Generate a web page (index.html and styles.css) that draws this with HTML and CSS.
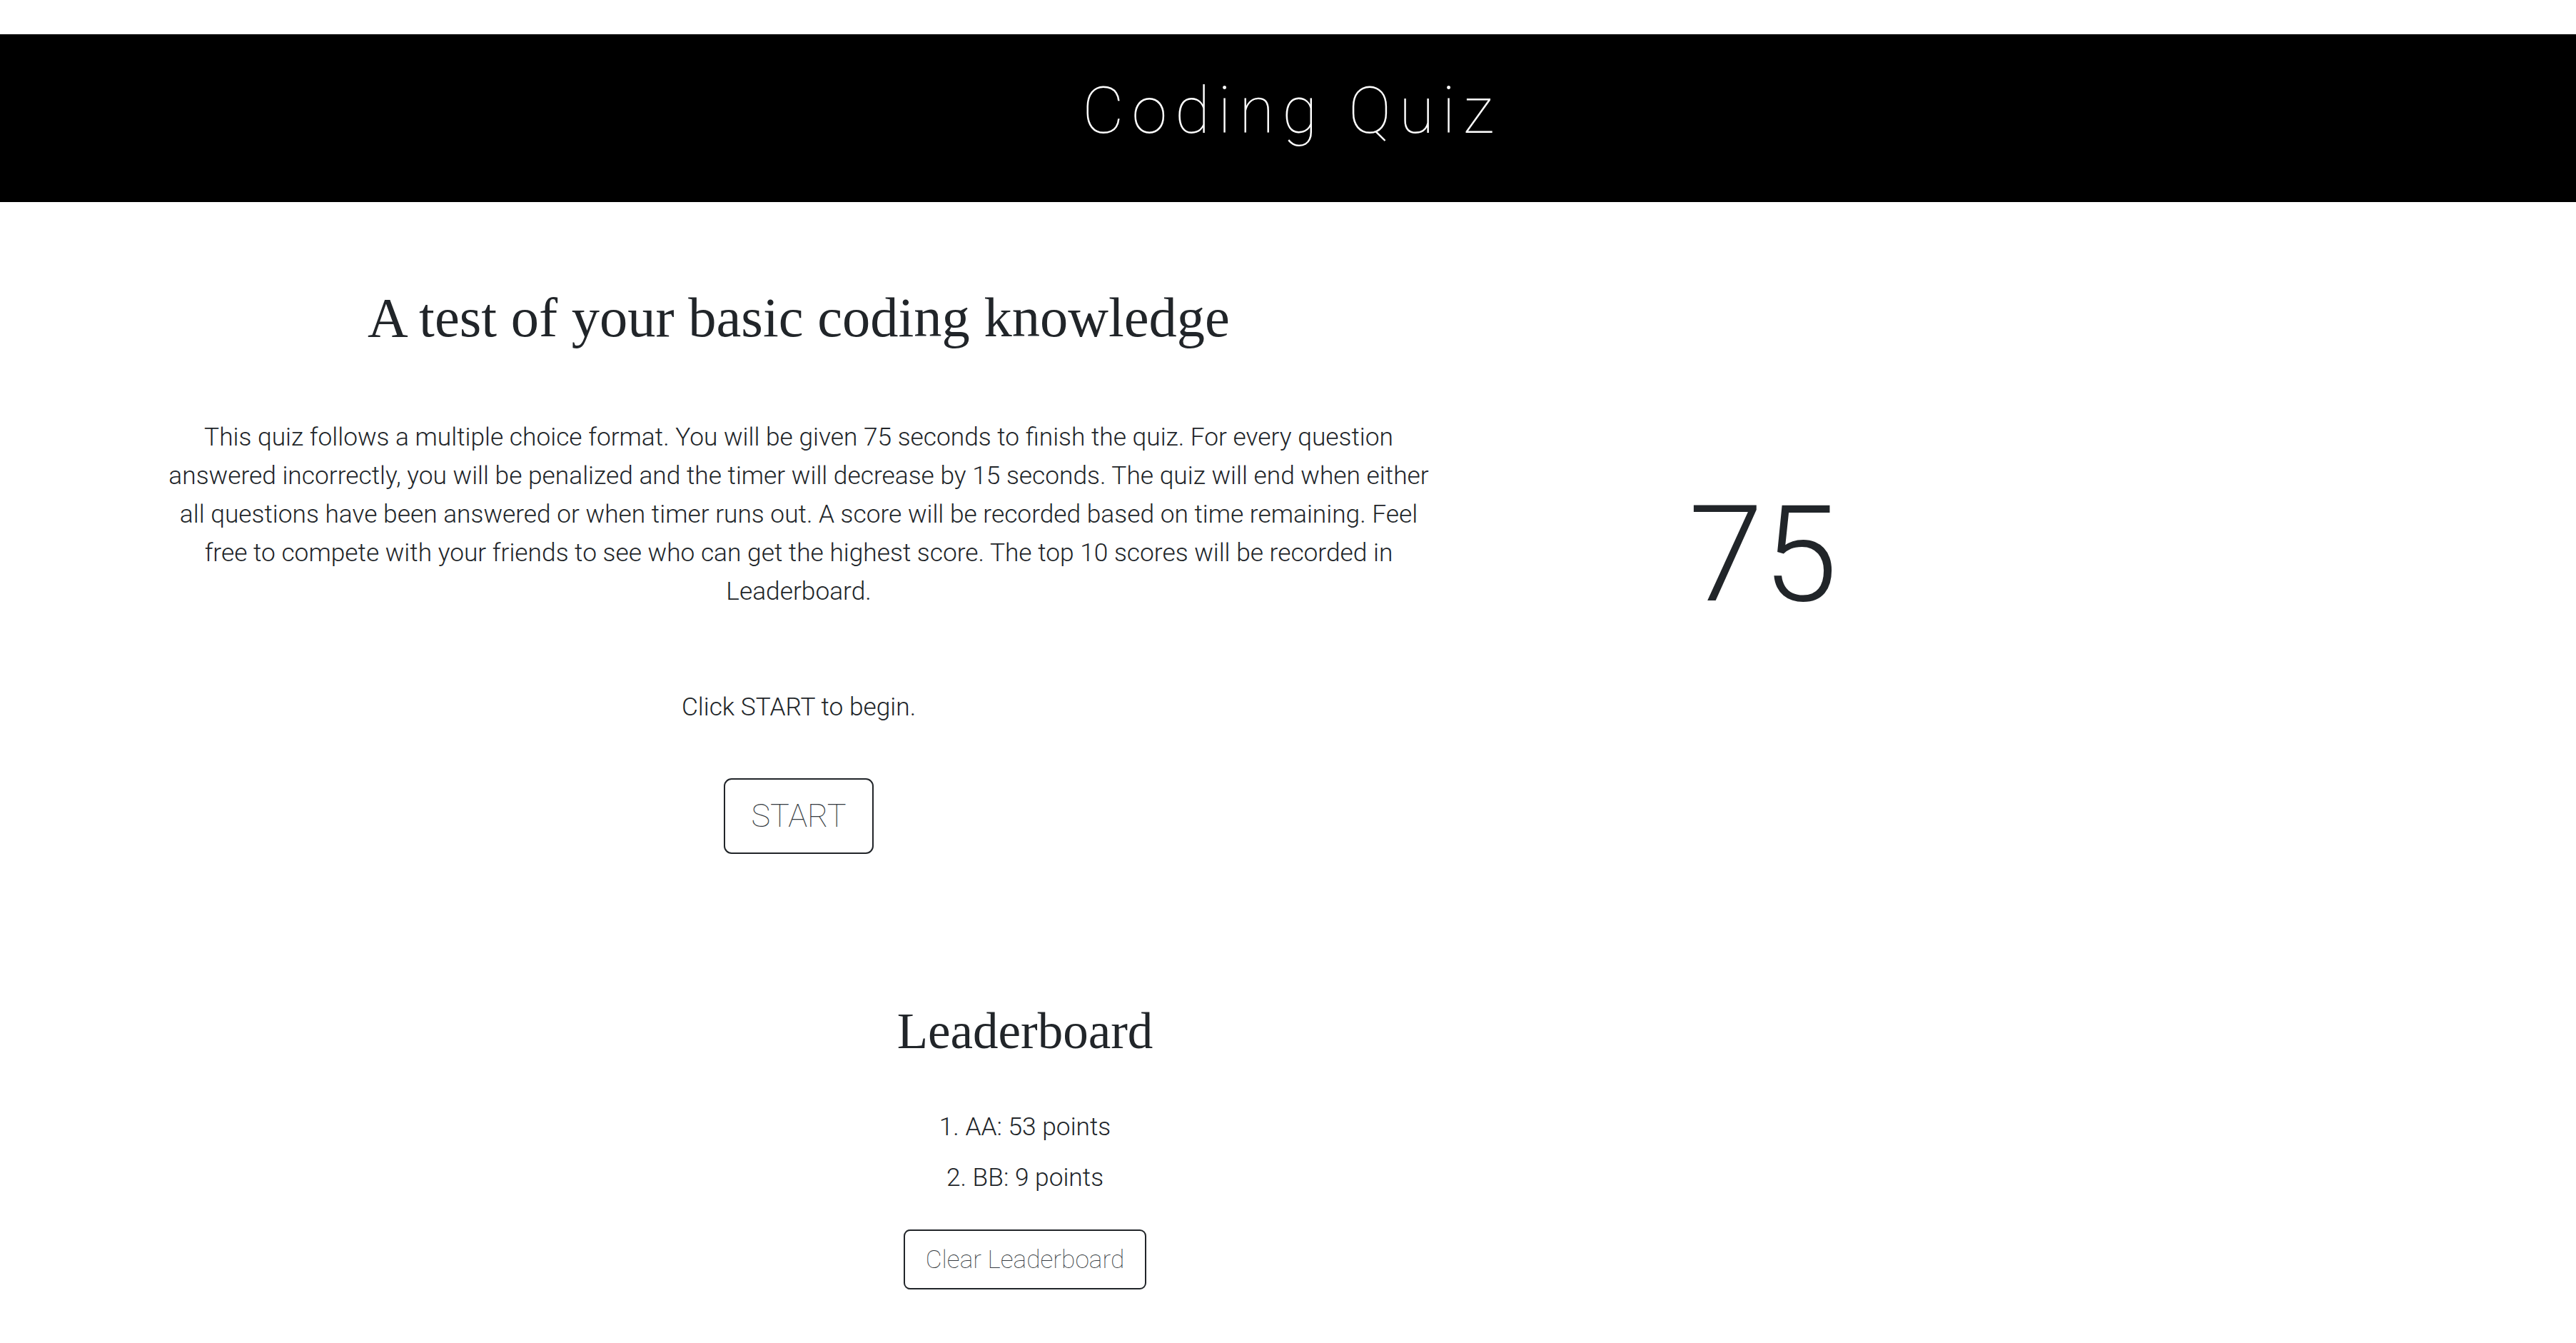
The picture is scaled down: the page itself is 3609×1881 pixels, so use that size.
FILE: index.html
```html
<!DOCTYPE html>
<html lang="en">
<head>
<meta charset="utf-8">
<title>Coding Quiz</title>
<link rel="stylesheet" href="styles.css">
</head>
<body>
<header class="site-header">
  <h1 class="site-title">Coding Quiz</h1>
</header>
<main class="main-row">
  <section class="intro">
    <h2 class="intro-heading">A test of your basic coding knowledge</h2>
    <p class="intro-text">This quiz follows a multiple choice format. You will be given 75 seconds to finish the quiz. For every question answered incorrectly, you will be penalized and the timer will decrease by 15 seconds. The quiz will end when either all questions have been answered or when timer runs out. A score will be recorded based on time remaining. Feel free to compete with your friends to see who can get the highest score. The top 10 scores will be recorded in Leaderboard.</p>
    <p class="intro-cta">Click START to begin.</p>
    <button class="btn btn-start" type="button">START</button>
  </section>
  <aside class="timer">75</aside>
</main>
<section class="leaderboard">
  <h3 class="leaderboard-heading">Leaderboard</h3>
  <ul class="score-list">
    <li class="score-item">1. AA: 53 points</li>
    <li class="score-item">2. BB: 9 points</li>
  </ul>
  <button class="btn btn-clear" type="button">Clear Leaderboard</button>
</section>
</body>
</html>
```

FILE: styles.css
```css
* {
  box-sizing: border-box;
}

html, body {
  margin: 0;
  padding: 0;
  background: #ffffff;
}

body {
  font-family: Roboto, "Liberation Sans", Arial, sans-serif;
  font-weight: 300;
  font-size: 35.3px;
  line-height: 1.5;
  color: #212529;
}

.site-header {
  margin-top: 48px;
  height: 235px;
  background: #000000;
  padding-top: 54px;
  text-align: center;
}

.site-title {
  margin: 0;
  font-family: Roboto, "Liberation Sans", sans-serif;
  font-weight: 100;
  font-size: 90px;
  line-height: 108px;
  letter-spacing: 11px;
  padding-left: 11px;
  color: #ffffff;
}

.main-row {
  display: flex;
  align-items: flex-start;
}

.intro {
  flex: 0 0 2238px;
  display: flex;
  flex-direction: column;
  align-items: center;
  text-align: center;
  padding-top: 115px;
}

.intro-heading {
  margin: 0;
  font-family: "Liberation Serif", "Times New Roman", serif;
  font-weight: 400;
  font-size: 78.5px;
  line-height: 1.2;
  color: #212529;
}

.intro-text {
  width: 1798px;
  margin: 93px 0 0;
  line-height: 54px;
}

.intro-cta {
  margin: 108px 0 0;
  line-height: 54px;
}

.btn {
  font-family: Roboto, "Liberation Sans", sans-serif;
  font-weight: 100;
  color: #343a40;
  background: transparent;
  border: 2px solid #212529;
  cursor: pointer;
}

.btn-start {
  margin-top: 73px;
  font-size: 45px;
  line-height: 67.5px;
  padding: 17px 36px;
  border-radius: 11px;
}

.timer {
  flex: 0 0 464px;
  margin-top: 382px;
  text-align: center;
  font-size: 188px;
  font-weight: 300;
  line-height: 1.2;
  color: #212529;
}

.leaderboard {
  width: 2872px;
  display: flex;
  flex-direction: column;
  align-items: center;
  text-align: center;
  padding-top: 206px;
  padding-bottom: 60px;
}

.leaderboard-heading {
  margin: 0;
  font-family: "Liberation Serif", "Times New Roman", serif;
  font-weight: 400;
  font-size: 71px;
  line-height: 1.2;
  color: #212529;
}

.score-list {
  list-style: none;
  margin: 56px 0 0;
  padding: 0;
}

.score-item {
  line-height: 71px;
}

.btn-clear {
  margin-top: 37px;
  font-size: 35.3px;
  line-height: 54px;
  padding: 13px 29px;
  border-radius: 9px;
}
```
